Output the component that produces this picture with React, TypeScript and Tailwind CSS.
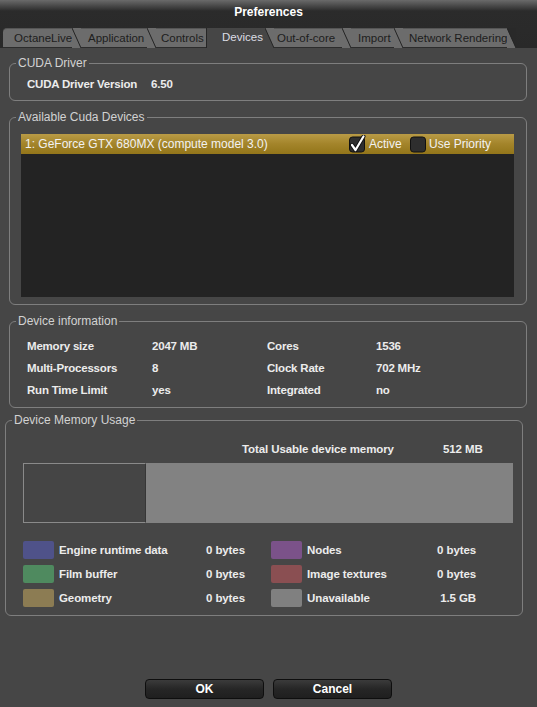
import React from "react"

const font = { fontFamily: '"Liberation Sans", Arial, sans-serif' }

interface Tab {
  label: string
  width: string
  pad: string
  active?: boolean
}

const tabs: Tab[] = [
  { label: "OctaneLive", width: "w-[69px]", pad: "pl-[11px]" },
  { label: "Application", width: "w-[66px]", pad: "pl-[7px]" },
  { label: "Controls", width: "w-[50px]", pad: "pl-[5px]" },
  { label: "Devices", width: "w-[58px]", pad: "pl-[15px]", active: true },
  { label: "Out-of-core", width: "w-[68px]", pad: "pl-[3px]" },
  { label: "Import", width: "w-[43px]", pad: "pl-[7px]" },
  { label: "Network Rendering", width: "w-[104px]", pad: "pl-[6px]" },
]

const TAB_GRAY = "#6c6c6c"
const PANEL = "#464646"
const STRIP = "#292929"

// diagonal edge between two tabs
function Slant({ left, right }: { left: string; right: string }) {
  return (
    <svg width="9" height="20" viewBox="0 0 9 20" className="block shrink-0">
      <polygon points="0,0 9,20 0,20" fill={left} />
      <polygon points="0,0 9,0 9,20" fill={right} />
      <line x1="0" y1="0" x2="9" y2="20" stroke="#262626" strokeWidth="1" />
    </svg>
  )
}

function TabBar() {
  return (
    <div className="flex h-[20px] pl-[3px]">
      {tabs.map((t, i) => {
        const next = tabs[i + 1]
        const color = t.active ? PANEL : TAB_GRAY
        return (
          <React.Fragment key={t.label}>
            <div
              className={
                t.active
                  ? `${t.width} ${t.pad} flex items-center bg-[#464646] text-[11.5px] text-[#dcdde4] whitespace-nowrap`
                  : `${t.width} ${t.pad} flex items-center bg-[#6c6c6c] text-[11.5px] text-[#1d1d1d] whitespace-nowrap border-t border-[#555] shadow-[inset_0_-1px_0_#2c2c2c] ${i === 0 ? "rounded-tl-[4px]" : ""}`
              }
            >
              {t.label}
            </div>
            {next && next.active ? (
              <div className="w-px bg-[#262626]" />
            ) : (
              <Slant left={color} right={next ? TAB_GRAY : STRIP} />
            )}
          </React.Fragment>
        )
      })}
    </div>
  )
}

function Group({
  title,
  className,
  children,
}: {
  title: string
  className: string
  children: React.ReactNode
}) {
  return (
    <fieldset className={`border border-[#7e7e7e] rounded-[6px] pl-[6px] ${className}`}>
      <legend className="px-[2px] text-[12px] leading-[14px] text-[#d2d2d2]">{title}</legend>
      {children}
    </fieldset>
  )
}

function CheckBox({ checked }: { checked: boolean }) {
  return (
    <svg width="18" height="18" viewBox="0 0 18 18" className="block">
      <rect x="1.5" y="2" width="15" height="15" rx="3" fill="#2e2e2e" stroke="#111" />
      {checked && (
        <>
          <path d="M4 10 L7.5 15 L15.5 1.5" fill="none" stroke="#111" strokeWidth="4" strokeLinecap="round" strokeLinejoin="round" />
          <path d="M4 10 L7.5 15 L15.5 1.5" fill="none" stroke="#fff" strokeWidth="2.2" strokeLinecap="round" strokeLinejoin="round" />
        </>
      )}
    </svg>
  )
}

const info = [
  ["Memory size", "2047 MB", "Cores", "1536"],
  ["Multi-Processors", "8", "Clock Rate", "702 MHz"],
  ["Run Time Limit", "yes", "Integrated", "no"],
]

const usage = [
  { c1: "bg-[#4f5289]", l1: "Engine runtime data", v1: "0 bytes", c2: "bg-[#7b5289]", l2: "Nodes", v2: "0 bytes" },
  { c1: "bg-[#4f8a5f]", l1: "Film buffer", v1: "0 bytes", c2: "bg-[#8a4f52]", l2: "Image textures", v2: "0 bytes" },
  { c1: "bg-[#8c7c53]", l1: "Geometry", v1: "0 bytes", c2: "bg-[#808080]", l2: "Unavailable", v2: "1.5 GB" },
]

export default function App() {
  return (
    <div style={font} className="w-[537px] h-[707px] bg-[#464646] flex flex-col overflow-hidden">
      {/* Title + tabs */}
      <div className="bg-[linear-gradient(#6a6a6a_0px,#3c3c3c_8px,#2b2b2b_11px,#292929_100%)]">
        <div className="h-[28px] pt-[5px] text-center text-[12px] leading-[15px] font-bold text-white">
          Preferences
        </div>
        <TabBar />
      </div>

      <Group title="CUDA Driver" className="mt-[8px] ml-[9px] mr-[10px] pb-[8px]">
        <div className="flex pl-[11px] pt-[6px] text-[11.5px] leading-[16px] font-bold tracking-[-0.2px] text-[#ececec]">
          <span className="w-[124px]">CUDA Driver Version</span>
          <span>6.50</span>
        </div>
      </Group>

      <Group title="Available Cuda Devices" className="mt-[9px] ml-[9px] mr-[10px] pb-[7px]">
        <div className="pt-[10px] pl-[5px] pr-[12px]">
          <div className="h-[163px] bg-[#232323]">
            <div className="h-[20px] flex items-center pl-[4px] bg-[linear-gradient(#b99b46,#a3842a_50%,#93751a)] text-[12px] text-[#f2f2f2]">
              <span className="w-[323px]">1: GeForce GTX 680MX (compute model 3.0)</span>
              <CheckBox checked />
              <span className="ml-[3px] w-[40px]">Active</span>
              <CheckBox checked={false} />
              <span className="ml-[2px]">Use Priority</span>
            </div>
          </div>
        </div>
      </Group>

      <Group title="Device information" className="mt-[9px] ml-[9px] mr-[10px] pb-[6px]">
        <div className="pl-[11px] pt-[7px] grid grid-cols-[125px_115px_109px_1fr] text-[11.5px] leading-[22px] font-bold tracking-[-0.2px] text-[#ececec]">
          {info.map((r) => (
            <React.Fragment key={r[0]}>
              <span>{r[0]}</span>
              <span>{r[1]}</span>
              <span>{r[2]}</span>
              <span>{r[3]}</span>
            </React.Fragment>
          ))}
        </div>
      </Group>

      <Group title="Device Memory Usage" className="mt-[5px] ml-[5px] mr-[14px] pb-[5px]">
        <div className="pl-[11px] pr-[9px] text-[11.5px] font-bold tracking-[-0.1px] text-[#ececec]">
          <div className="flex pt-[14px] leading-[16px]">
            <span className="w-[219px]" />
            <span className="w-[201px]">Total Usable device memory</span>
            <span>512 MB</span>
          </div>
          <div className="mt-[6px] h-[60px] flex">
            <div className="w-[123px] border border-[#8a8a8a] border-r-[#363636] bg-[#454545]" />
            <div className="flex-1 bg-[#828282]" />
          </div>
          <div className="mt-[15px] grid grid-cols-[31px_152px_65px_31px_118px_56px]">
            {usage.map((u) => (
              <React.Fragment key={u.l1}>
                <div className="h-[24px] flex items-center">
                  <div className={`w-[31px] h-[18px] rounded-[2px] ${u.c1}`} />
                </div>
                <div className="pl-[5px] leading-[24px]">{u.l1}</div>
                <div className="leading-[24px]">{u.v1}</div>
                <div className="h-[24px] flex items-center">
                  <div className={`w-[31px] h-[18px] rounded-[2px] ${u.c2}`} />
                </div>
                <div className="pl-[5px] leading-[24px]">{u.l2}</div>
                <div className="leading-[24px] text-right">{u.v2}</div>
              </React.Fragment>
            ))}
          </div>
        </div>
      </Group>

      <div className="flex-1" />

      <div className="flex justify-center gap-[9px] pb-[8px]">
        {["OK", "Cancel"].map((b) => (
          <button
            key={b}
            className="w-[119px] h-[20px] rounded-[4px] border border-[#0e0e0e] bg-[linear-gradient(#3b3b3b,#262626_50%,#1f1f1f)] text-[12px] font-bold text-white leading-[18px]"
          >
            {b}
          </button>
        ))}
      </div>
    </div>
  )
}
